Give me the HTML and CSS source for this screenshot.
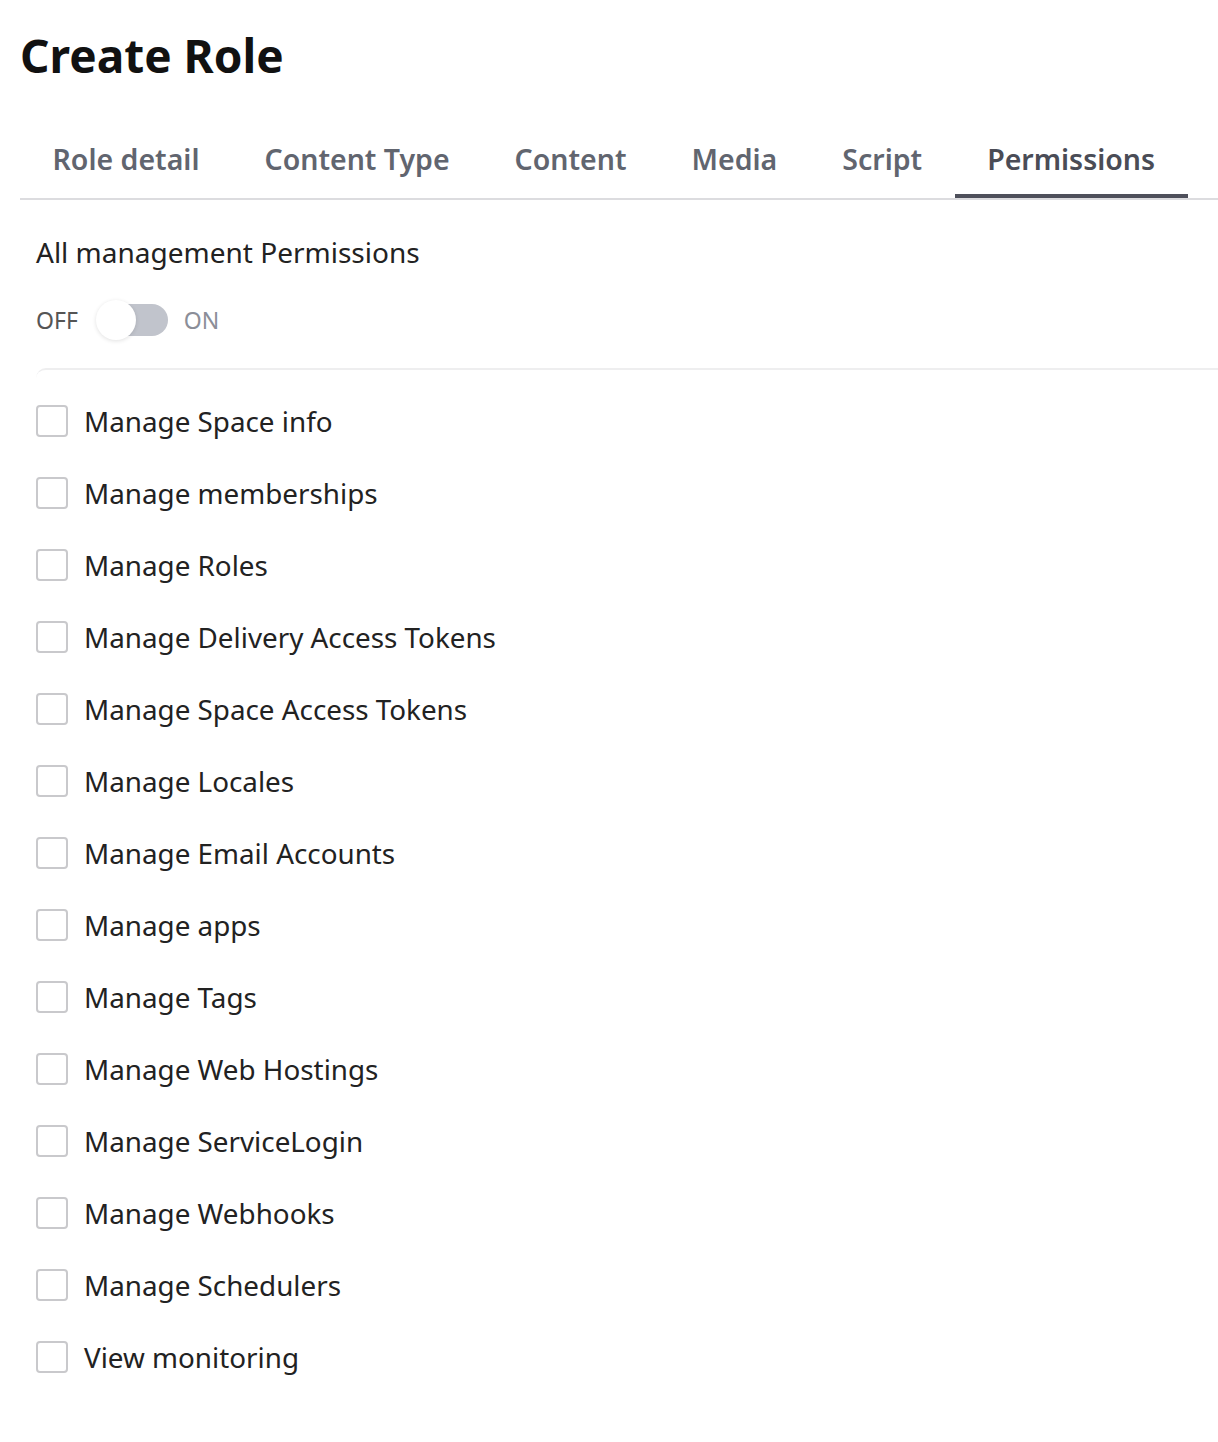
FILE: index.html
```html
<!DOCTYPE html>
<html lang="en">
<head>
    <meta charset="UTF-8">
    <meta name="viewport" content="width=device-width, initial-scale=1.0">
    <title>Create Role</title>
    <link rel="stylesheet" href="styles.css">
</head>
<body>

<div class="page">
    <h1 class="title">Create Role</h1>

    <div class="tabs">
        <div class="tab">Role detail</div>
        <div class="tab">Content Type</div>
        <div class="tab">Content</div>
        <div class="tab">Media</div>
        <div class="tab">Script</div>
        <div class="tab active">Permissions</div>
    </div>

    <div class="panel">
        <div class="all-label">All management Permissions</div>

        <div class="switch-row">
            <span class="switch-text">OFF</span>
            <span class="switch">
                <span class="track"></span>
                <span class="knob"></span>
            </span>
            <span class="switch-text on">ON</span>
        </div>

        <div class="perm-list">
            <label class="perm"><span class="box"></span>Manage Space info</label>
            <label class="perm"><span class="box"></span>Manage memberships</label>
            <label class="perm"><span class="box"></span>Manage Roles</label>
            <label class="perm"><span class="box"></span>Manage Delivery Access Tokens</label>
            <label class="perm"><span class="box"></span>Manage Space Access Tokens</label>
            <label class="perm"><span class="box"></span>Manage Locales</label>
            <label class="perm"><span class="box"></span>Manage Email Accounts</label>
            <label class="perm"><span class="box"></span>Manage apps</label>
            <label class="perm"><span class="box"></span>Manage Tags</label>
            <label class="perm"><span class="box"></span>Manage Web Hostings</label>
            <label class="perm"><span class="box"></span>Manage ServiceLogin</label>
            <label class="perm"><span class="box"></span>Manage Webhooks</label>
            <label class="perm"><span class="box"></span>Manage Schedulers</label>
            <label class="perm"><span class="box"></span>View monitoring</label>
        </div>
    </div>
</div>

</body>
</html>
```

FILE: styles.css
```css
body {
    margin: 0;
    background-color: #fff;
    font-family: "Noto Sans", "Open Sans", sans-serif;
    color: #222;
}

.page {
    padding: 0 0 0 20px;
}

.title {
    margin: 0;
    padding: 22px 0 0 0;
    font-size: 46px;
    font-weight: 700;
    line-height: 66px;
    color: #111;
}

.tabs {
    display: flex;
    margin-top: 48px;
    border-bottom: 2px solid #dcdcdf;
}

.tab {
    padding: 0 32.5px 12px;
    font-size: 28.5px;
    font-weight: 600;
    line-height: 46px;
    color: #61656f;
    border-bottom: 4px solid transparent;
}

.tab.active {
    color: #4a4c56;
    border-bottom-color: #4e505b;
}

.panel {
    padding-left: 16px;
}

.all-label {
    margin-top: 32px;
    font-size: 28px;
    line-height: 40px;
    color: #222;
}

.switch-row {
    display: flex;
    align-items: center;
    margin-top: 28px;
    height: 40px;
}

.switch-text {
    font-size: 23px;
    color: #555;
}

.switch-text.on {
    color: #8b8e98;
}

.switch {
    position: relative;
    width: 72px;
    height: 40px;
    margin: 0 16px 0 18px;
}

.track {
    position: absolute;
    left: 4px;
    top: 4px;
    width: 68px;
    height: 32px;
    border-radius: 16px;
    background-color: #c1c4cc;
}

.knob {
    position: absolute;
    left: 0;
    top: 0;
    width: 40px;
    height: 40px;
    border-radius: 50%;
    background-color: #fff;
    box-shadow: 0 1px 4px rgba(0, 0, 0, 0.12);
}

.perm-list {
    margin-top: 28px;
    border-top: 2px solid #eeeeef;
    border-top-left-radius: 10px;
    padding-top: 15px;
}

.perm {
    display: flex;
    align-items: center;
    height: 72px;
    font-size: 27.8px;
    color: #222;
}

.box {
    width: 28px;
    height: 28px;
    border: 2px solid #c9c9cc;
    border-radius: 4px;
    margin-right: 16px;
    flex-shrink: 0;
}
```
